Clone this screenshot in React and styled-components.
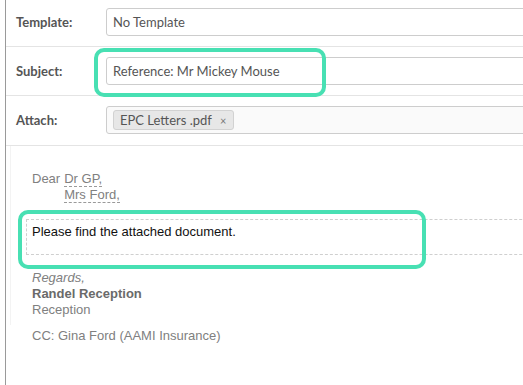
import React from "react";
import styled, { createGlobalStyle } from "styled-components";

const Global = createGlobalStyle`
  html, body { margin: 0; padding: 0; background: #fff; }
  body { width: 523px; height: 385px; overflow: hidden; }
`;

const Page = styled.div`
  position: relative;
  width: 523px;
  height: 385px;
  overflow: hidden;
  background: #fff;
`;

const Frame = styled.div`
  margin-left: 5px;
  height: 385px;
  border-left: 1px solid #9a9a9a;
  box-sizing: border-box;
`;

const Row = styled.div`
  display: flex;
  align-items: center;
  padding: ${(p) => p.$pad};
  padding-left: 10px;
  border-bottom: 1px solid #e4e4e4;
`;

const Label = styled.div`
  width: 90px;
  flex: none;
  font-family: Lato, "Liberation Sans", sans-serif;
  font-weight: 700;
  font-size: 13px;
  color: #555;
`;

const Field = styled.div`
  flex: none;
  width: 440px;
  height: 28px;
  box-sizing: border-box;
  border: 1px solid #cdcdcd;
  border-radius: 3px;
  background: ${(p) => (p.$muted ? "#fafafa" : "#fff")};
  display: flex;
  align-items: center;
  padding: 0 6px;
  font-family: Lato, "Liberation Sans", sans-serif;
  font-size: 13px;
  color: #555;
`;

const Chip = styled.span`
  display: inline-flex;
  align-items: center;
  height: 20px;
  box-sizing: border-box;
  padding: 0 7px 0 6px;
  background: #e7e7e7;
  border: 1px solid #d2d2d2;
  border-radius: 3px;
  font-family: Lato, "Liberation Sans", sans-serif;
  font-size: 13px;
  color: #555;
`;

const ChipClose = styled.span`
  margin-left: 8px;
  font-size: 11px;
  color: #777;
`;

const Body = styled.div`
  margin-left: 4px;
  border-left: 1px solid #f3f3f3;
  padding-top: 25px;
  padding-bottom: 7px;
  font-family: "Liberation Sans", Arial, sans-serif;
  font-size: 13px;
  line-height: 16px;
  color: #808080;
`;

const Greeting = styled.div`
  padding-left: 21px;
  display: flex;
  align-items: flex-start;
`;

const Names = styled.div`
  display: flex;
  flex-direction: column;
  align-items: flex-start;
  margin-left: 4px;
`;

const Name = styled.span`
  line-height: 15px;
  border-bottom: 1px dashed #9a9a9a;
`;

const Editable = styled.div`
  margin: 16px 0 0 15px;
  width: 540px;
  border: 1px dashed #cfcfcf;
  border-right: none;
  padding: 4px 5px 14px;
  color: #111;
`;

const Signature = styled.div`
  padding-left: 21px;
  margin-top: 15px;
`;

const Regards = styled.div`
  font-style: italic;
`;

const Strong = styled.div`
  font-weight: 700;
  color: #6a6a6a;
`;

const Cc = styled.div`
  padding-left: 26px;
  margin-top: 3px;
  font-family: "Liberation Sans", Arial, sans-serif;
  font-size: 13px;
  line-height: 16px;
  color: #808080;
`;

const Highlight = styled.div`
  position: absolute;
  left: ${(p) => p.$x}px;
  top: ${(p) => p.$y}px;
  width: ${(p) => p.$w}px;
  height: ${(p) => p.$h}px;
  box-sizing: border-box;
  border: 4px solid #48e0b3;
  border-radius: 10px;
  pointer-events: none;
`;

export default function App() {
  return (
    <Page>
      <Global />
      <Frame>
        <Row $pad="8px 0 10px">
          <Label>Template:</Label>
          <Field>No Template</Field>
        </Row>
        <Row $pad="10px 0 10px">
          <Label>Subject:</Label>
          <Field>Reference: Mr Mickey Mouse</Field>
        </Row>
        <Row $pad="10px 0 11px">
          <Label>Attach:</Label>
          <Field $muted>
            <Chip>
              EPC Letters .pdf<ChipClose>×</ChipClose>
            </Chip>
          </Field>
        </Row>
        <Body>
          <Greeting>
            Dear
            <Names>
              <Name>Dr GP,</Name>
              <Name>Mrs Ford,</Name>
            </Names>
          </Greeting>
          <Editable>Please find the attached document.</Editable>
          <Signature>
            <Regards>Regards,</Regards>
            <Strong>Randel Reception</Strong>
            <div>Reception</div>
          </Signature>
        </Body>
        <Cc>CC: Gina Ford (AAMI Insurance)</Cc>
      </Frame>
      <Highlight $x={94} $y={48} $w={232} $h={49} />
      <Highlight $x={18} $y={210} $w={408} $h={59} />
    </Page>
  );
}
